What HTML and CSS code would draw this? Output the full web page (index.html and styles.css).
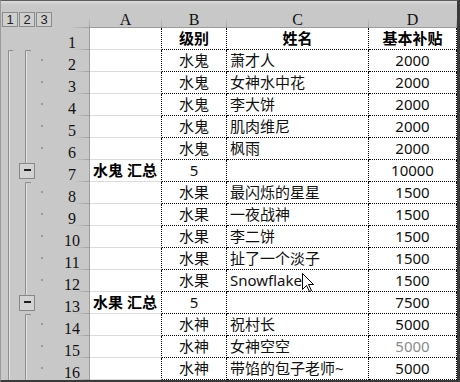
FILE: index.html
```html
<!DOCTYPE html>
<html lang="zh">
<head>
<meta charset="utf-8">
<title>分类汇总</title>
<link rel="stylesheet" href="styles.css">
</head>
<body>
<div class="sheet">
  <div class="grid">
    <div class="hd levels"><span class="lvl">1</span><span class="lvl">2</span><span class="lvl">3</span></div>
    <div class="hd corner"></div>
    <div class="hd col">A</div>
    <div class="hd col">B</div>
    <div class="hd col">C</div>
    <div class="hd col">D</div>

    <svg class="outline" width="54" height="330" viewBox="0 0 54 330">
      <g class="bar">
        <path d="M7.5 0.5 H12 M7.5 0.5 V330"/>
        <path d="M24.5 0.5 H30 M24.5 0.5 V113"/>
        <path d="M24.5 132.5 H30 M24.5 132.5 V245"/>
        <path d="M24.5 264.5 H30 M24.5 264.5 V330"/>
      </g>
      <g class="bar-hi">
        <path d="M8.5 1.5 V330"/>
        <path d="M25.5 1.5 V113"/>
        <path d="M25.5 133.5 V245"/>
        <path d="M25.5 265.5 V330"/>
      </g>
      <g class="dots">
        <rect x="40" y="9" width="2" height="2"/>
        <rect x="40" y="31" width="2" height="2"/>
        <rect x="40" y="53" width="2" height="2"/>
        <rect x="40" y="75" width="2" height="2"/>
        <rect x="40" y="97" width="2" height="2"/>
        <rect x="40" y="141" width="2" height="2"/>
        <rect x="40" y="163" width="2" height="2"/>
        <rect x="40" y="185" width="2" height="2"/>
        <rect x="40" y="207" width="2" height="2"/>
        <rect x="40" y="229" width="2" height="2"/>
        <rect x="40" y="273" width="2" height="2"/>
        <rect x="40" y="295" width="2" height="2"/>
        <rect x="40" y="317" width="2" height="2"/>
      </g>
      <g class="btn">
        <rect x="18.5" y="113.5" width="15" height="15"/>
        <rect x="18.5" y="245.5" width="15" height="15"/>
      </g>
      <g class="minus">
        <rect x="23" y="119" width="7" height="2"/>
        <rect x="23" y="251" width="7" height="2"/>
      </g>
    </svg>

    <div class="gap"></div>
    <div class="rh">1</div>
    <div class="c a"></div>
    <div class="c b bold">级别</div>
    <div class="c n mid bold">姓名</div>
    <div class="c d bold">基本补贴</div>

    <div class="rh">2</div><div class="c a"></div><div class="c b">水鬼</div><div class="c n">萧才人</div><div class="c d">2000</div>
    <div class="rh">3</div><div class="c a"></div><div class="c b">水鬼</div><div class="c n">女神水中花</div><div class="c d">2000</div>
    <div class="rh">4</div><div class="c a"></div><div class="c b">水鬼</div><div class="c n">李大饼</div><div class="c d">2000</div>
    <div class="rh">5</div><div class="c a"></div><div class="c b">水鬼</div><div class="c n">肌肉维尼</div><div class="c d">2000</div>
    <div class="rh">6</div><div class="c a"></div><div class="c b">水鬼</div><div class="c n">枫雨</div><div class="c d">2000</div>
    <div class="rh">7</div><div class="c a bold">水鬼 汇总</div><div class="c b">5</div><div class="c n"></div><div class="c d">10000</div>
    <div class="rh">8</div><div class="c a"></div><div class="c b">水果</div><div class="c n">最闪烁的星星</div><div class="c d">1500</div>
    <div class="rh">9</div><div class="c a"></div><div class="c b">水果</div><div class="c n">一夜战神</div><div class="c d">1500</div>
    <div class="rh">10</div><div class="c a"></div><div class="c b">水果</div><div class="c n">李二饼</div><div class="c d">1500</div>
    <div class="rh">11</div><div class="c a"></div><div class="c b">水果</div><div class="c n">扯了一个淡子</div><div class="c d">1500</div>
    <div class="rh">12</div><div class="c a"></div><div class="c b">水果</div><div class="c n">Snowflake</div><div class="c d">1500</div>
    <div class="rh">13</div><div class="c a bold">水果 汇总</div><div class="c b">5</div><div class="c n"></div><div class="c d">7500</div>
    <div class="rh">14</div><div class="c a"></div><div class="c b">水神</div><div class="c n">祝村长</div><div class="c d">5000</div>
    <div class="rh">15</div><div class="c a"></div><div class="c b">水神</div><div class="c n">女神空空</div><div class="c d faded">5000</div>
    <div class="rh">16</div><div class="c a"></div><div class="c b">水神</div><div class="c n">带馅的包子老师~</div><div class="c d">5000</div>
  </div>
  <svg class="cursor" width="13" height="20" viewBox="0 0 13 20">
    <path d="M0.5 0.5 L0.5 16.5 L4.5 12.5 L7.5 18.5 L9.5 17.5 L6.5 11.5 L11.5 11.5 Z"/>
  </svg>
</div>
</body>
</html>
```

FILE: styles.css
```css
html, body {
  margin: 0;
  padding: 0;
  background: #c8c8c8;
}

.sheet {
  position: relative;
  width: 456px;
  height: 379px;
  border-top: 1px solid #5c5c5c;
  border-left: 1px solid #9a9a9a;
  border-right: 3px solid #3a3a3a;
  border-bottom: 2px solid #3a3a3a;
  background: #c8c8c8;
  overflow: hidden;
}

.grid {
  display: grid;
  grid-template-columns: 54px 35px 72px 65px 142px 88px;
  grid-template-rows: 27px repeat(16, 22px);
  background: #c8c8c8;
}

/* header band */
.hd {
  box-sizing: border-box;
  background: linear-gradient(#dcdcdc, #c8c8c8 4px);
}

.levels {
  display: flex;
  align-items: flex-end;
  gap: 1px;
  padding: 0 0 1px 1px;
}

.lvl {
  box-sizing: border-box;
  width: 16px;
  height: 15px;
  border: 1px solid #8c8c8c;
  background: #cfcfcf;
  font: 13px/13px "Liberation Sans", sans-serif;
  color: #222;
  text-align: center;
}

.corner {
  background:
    linear-gradient(to right, rgba(150,150,150,0), #9c9c9c) right bottom / 20px 1px no-repeat,
    linear-gradient(to bottom, rgba(150,150,150,0), #9c9c9c) right bottom / 1px 11px no-repeat,
    linear-gradient(#dcdcdc, #c8c8c8 4px);
}

.col {
  display: flex;
  justify-content: center;
  align-items: flex-end;
  font: 16px/14px "Liberation Serif", serif;
  color: #111;
  border-bottom: 1px solid #9c9c9c;
  padding-right: 1px;
  background:
    linear-gradient(to bottom, rgba(150,150,150,0), #a4a4a4) right bottom / 1px 9px no-repeat,
    linear-gradient(#dcdcdc, #c8c8c8 4px);
}

/* outline column */
.outline {
  grid-column: 1;
  grid-row: 3 / span 15;
  display: block;
}

.bar path {
  fill: none;
  stroke: #8e8e8e;
  stroke-width: 1;
}

.bar-hi path {
  fill: none;
  stroke: #e2e2e2;
  stroke-width: 1;
}

.dots rect {
  fill: #9a9a9a;
}

.btn rect {
  fill: #d2d2d2;
  stroke: #888888;
  stroke-width: 1;
}

.minus rect {
  fill: #1e1e1e;
}

/* row headers */
.rh {
  box-sizing: border-box;
  display: flex;
  justify-content: center;
  align-items: flex-end;
  font: 16px/14px "Liberation Serif", serif;
  color: #111;
  border-right: 1px solid #9c9c9c;
  background:
    linear-gradient(to right, rgba(150,150,150,0), #a0a0a0) right bottom / 15px 1px no-repeat;
}

/* cells */
.c {
  box-sizing: border-box;
  display: flex;
  align-items: center;
  padding: 0 3px 1px;
  background: #ffffff;
  border-right: 1px dotted #000;
  border-bottom: 1px dotted #000;
  font: 15px/20px "Noto Sans", "Noto Sans CJK SC", sans-serif;
  color: #111;
  white-space: nowrap;
  overflow: hidden;
}

.c.a {
  border-bottom: 1px solid #dcdcdc;
}

.c.b,
.c.d,
.c.mid {
  justify-content: center;
}

.bold {
  font-weight: 700;
  color: #000;
}

.faded {
  color: #8c8c8c;
}

/* mouse pointer over the sheet */
.cursor {
  position: absolute;
  left: 301px;
  top: 272px;
}

.cursor path {
  fill: #ffffff;
  stroke: #000000;
  stroke-width: 1;
  stroke-linejoin: miter;
}
```
